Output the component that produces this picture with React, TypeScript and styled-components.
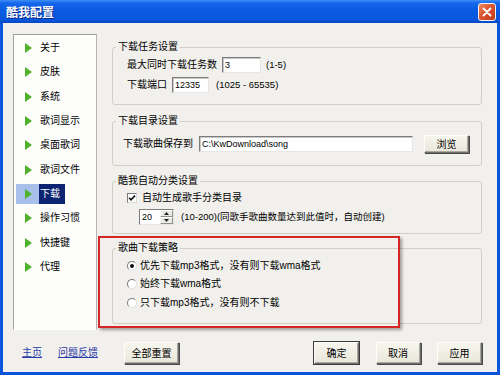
import React from "react";
import styled, { createGlobalStyle } from "styled-components";

const GlobalStyle = createGlobalStyle`
  html, body { margin: 0; padding: 0; background: #fff; }
  body {
    font-family: "Liberation Sans", "Noto Sans CJK SC", sans-serif;
    font-size: 10px;
    color: #000;
    overflow: hidden;
  }
  * { box-sizing: border-box; }
`;

const Window = styled.div`
  width: 500px;
  height: 375px;
  display: flex;
  flex-direction: column;
  background: #0b55dc;
`;

const TitleBar = styled.div`
  height: 23px;
  flex: none;
  display: flex;
  align-items: center;
  justify-content: space-between;
  padding: 0 4px 0 6px;
  background: linear-gradient(
    #3d8ef6 0%,
    #1466ea 14%,
    #0a5be2 45%,
    #0957dc 85%,
    #0846c4 100%
  );
`;

const Title = styled.div`
  color: #fff;
  font-family: "Noto Sans CJK SC", sans-serif;
  font-weight: bold;
  font-size: 12px;
  line-height: 14px;
  text-shadow: 1px 1px 0 #0b2a88;
`;

const CloseButton = styled.div`
  width: 18px;
  height: 18px;
  border: 1px solid #f4f4f4;
  border-radius: 3px;
  background: linear-gradient(135deg, #f08a66 0%, #dc5430 45%, #c03c1c 100%);
  display: flex;
  align-items: center;
  justify-content: center;
`;

const Body = styled.div`
  position: relative;
  flex: 1;
  margin: 0 3px 3px;
  background: #f1f0ec;
  padding: 11px 15px 8px 10px;
  display: flex;
  flex-direction: column;
`;

const Main = styled.div`
  display: flex;
  gap: 15px;
  height: 296px;
`;

const Sidebar = styled.ul`
  width: 84px;
  flex: none;
  margin: 0;
  padding: 3px 0 0 0;
  list-style: none;
  background: #fdfdfc;
  border: 1px solid;
  border-color: #a0a0a0 #b4b4b4 #fff #a0a0a0;
  display: flex;
  flex-direction: column;
  gap: 4.33px;
`;

const NavItem = styled.li`
  height: 20px;
  display: flex;
  align-items: stretch;
  padding-left: 2px;
`;

const NavIcon = styled.span<{ $active?: boolean }>`
  width: 23px;
  display: flex;
  align-items: center;
  padding-left: 9px;
  background: ${(p) => (p.$active ? "#a7bfea" : "transparent")};
`;

const Triangle = styled.span`
  width: 0;
  height: 0;
  border-top: 5px solid transparent;
  border-bottom: 5px solid transparent;
  border-left: 7px solid #4fb12c;
`;

const NavLabel = styled.span<{ $active?: boolean }>`
  display: flex;
  align-items: center;
  padding: 0 5px 0 1px;
  line-height: 20px;
  font-size: 10px;
  white-space: nowrap;
  color: ${(p) => (p.$active ? "#fff" : "#000")};
  background: ${(p) => (p.$active ? "#0c2472" : "transparent")};
`;

const Content = styled.div`
  flex: 1;
  min-width: 0;
  padding-top: 7px;
  display: flex;
  flex-direction: column;
`;

const Group = styled.fieldset<{ $mt?: number }>`
  margin: ${(p) => p.$mt ?? 0}px 0 0 0;
  padding: 0;
  min-width: 0;
  border: 1px solid #cfcfc6;
  border-radius: 3px;
`;

const Legend = styled.legend`
  margin-left: 3px;
  padding: 0 2px;
  font-size: 10px;
  line-height: 12px;
  color: #000;
`;

const GroupBody = styled.div<{ $pad: string; $gap: number }>`
  display: flex;
  flex-direction: column;
  padding: ${(p) => p.$pad};
  gap: ${(p) => p.$gap}px;
`;

const Row = styled.div<{ $gap?: number; $indent?: number }>`
  display: flex;
  align-items: center;
  min-height: 16px;
  gap: ${(p) => p.$gap ?? 5}px;
  padding-left: ${(p) => p.$indent ?? 0}px;
`;

const FieldLabel = styled.span`
  white-space: nowrap;
  line-height: 16px;
`;

const TextBox = styled.div<{ $w: number }>`
  width: ${(p) => p.$w}px;
  height: 16px;
  flex: none;
  background: #fff;
  border: 1px solid;
  border-color: #7c7c7c #e6e6e6 #e6e6e6 #7c7c7c;
  box-shadow: inset 1px 1px 0 #c8c8c8;
  font-family: "Liberation Sans", sans-serif;
  font-size: 9px;
  line-height: 14px;
  padding-left: 2px;
  white-space: nowrap;
  overflow: hidden;
`;

const Hint = styled.span`
  font-family: "Liberation Sans", "Noto Sans CJK SC", sans-serif;
  font-size: 9.5px;
  white-space: nowrap;
  line-height: 16px;
`;

const Button = styled.button<{ $w: number; $h: number; $default?: boolean }>`
  width: ${(p) => p.$w}px;
  height: ${(p) => p.$h}px;
  flex: none;
  padding: 0;
  margin: 0;
  font-family: "Noto Sans CJK SC", sans-serif;
  font-size: 10px;
  line-height: 12px;
  color: #000;
  background: linear-gradient(#f7f6ee, #e9e7da);
  border: 1px solid;
  border-color: #fdfdfd #6e6e6e #6e6e6e #fdfdfd;
  box-shadow: ${(p) =>
    p.$default
      ? "0 0 0 1px #3a3a3a, inset -1px -1px 0 #a8a8a0"
      : "1px 1px 0 #4a4a4a, inset -1px -1px 0 #a8a8a0"};
`;

const CheckBox = styled.span`
  width: 10px;
  height: 10px;
  flex: none;
  background: #fff;
  border: 1px solid;
  border-color: #7a7a7a #dcdcdc #dcdcdc #7a7a7a;
  display: flex;
  align-items: center;
  justify-content: center;
`;

const Spin = styled.div`
  display: flex;
  height: 16px;
  flex: none;
`;

const SpinField = styled.div`
  width: 21px;
  height: 16px;
  background: #fff;
  border: 1px solid;
  border-color: #7c7c7c #e6e6e6 #e6e6e6 #7c7c7c;
  border-right: none;
  font-family: "Liberation Sans", sans-serif;
  font-size: 9px;
  line-height: 14px;
  padding-left: 2px;
`;

const SpinButtons = styled.div`
  width: 14px;
  height: 16px;
  display: flex;
  flex-direction: column;
  border: 1px solid;
  border-color: #7c7c7c #e6e6e6 #e6e6e6 #7c7c7c;
  border-left: none;
`;

const SpinHalf = styled.div`
  flex: 1;
  display: flex;
  align-items: center;
  justify-content: center;
  background: #ecebe3;
  border: 1px solid;
  border-color: #fff #909090 #909090 #fff;
`;

const Radio = styled.span<{ $checked?: boolean }>`
  width: 10px;
  height: 10px;
  flex: none;
  border-radius: 50%;
  background: #fff;
  border: 1px solid;
  border-color: #7a7a7a #e0e0e0 #e0e0e0 #7a7a7a;
  display: flex;
  align-items: center;
  justify-content: center;
  &::after {
    content: "";
    width: 4px;
    height: 4px;
    border-radius: 50%;
    background: ${(p) => (p.$checked ? "#111" : "transparent")};
  }
`;

const Footer = styled.div`
  display: flex;
  align-items: center;
  height: 22px;
  margin-top: 12px;
  padding-left: 9px;
`;

const FooterLink = styled.a<{ $ml?: number }>`
  margin-left: ${(p) => p.$ml ?? 0}px;
  color: #2a3aa6;
  text-decoration: underline;
  font-size: 10px;
  line-height: 14px;
  cursor: pointer;
`;

const LeftActions = styled.div`
  margin-left: 26px;
  display: flex;
`;

const RightActions = styled.div`
  margin-left: auto;
  display: flex;
  gap: 16.5px;
`;

const Highlight = styled.div`
  position: absolute;
  left: 95px;
  top: 213px;
  width: 302px;
  height: 92px;
  border: 2.5px solid #d42626;
  box-shadow: 2px 2px 3px rgba(0, 0, 0, 0.35);
  pointer-events: none;
`;

const navItems = [
  "关于",
  "皮肤",
  "系统",
  "歌词显示",
  "桌面歌词",
  "歌词文件",
  "下载",
  "操作习惯",
  "快捷键",
  "代理",
];

const strategies = [
  "优先下载mp3格式，没有则下载wma格式",
  "始终下载wma格式",
  "只下载mp3格式，没有则不下载",
];

export default function App() {
  return (
    <>
      <GlobalStyle />
      <Window>
        <TitleBar>
          <Title>酷我配置</Title>
          <CloseButton>
            <svg width="10" height="10" viewBox="0 0 10 10">
              <path d="M1.5 1.5 L8.5 8.5 M8.5 1.5 L1.5 8.5" stroke="#fff" strokeWidth="1.8" strokeLinecap="round" />
            </svg>
          </CloseButton>
        </TitleBar>
        <Body>
          <Main>
            <Sidebar>
              {navItems.map((n) => (
                <NavItem key={n}>
                  <NavIcon $active={n === "下载"}>
                    <Triangle />
                  </NavIcon>
                  <NavLabel $active={n === "下载"}>{n}</NavLabel>
                </NavItem>
              ))}
            </Sidebar>
            <Content>
              <Group>
                <Legend>下载任务设置</Legend>
                <GroupBody $pad="4px 0 11px 14px" $gap={4}>
                  <Row>
                    <FieldLabel>最大同时下载任务数</FieldLabel>
                    <TextBox $w={39}>3</TextBox>
                    <Hint>(1-5)</Hint>
                  </Row>
                  <Row>
                    <FieldLabel>下载端口</FieldLabel>
                    <TextBox $w={37}>12335</TextBox>
                    <Hint style={{ marginLeft: 2 }}>(1025 - 65535)</Hint>
                  </Row>
                </GroupBody>
              </Group>
              <Group $mt={10}>
                <Legend>下载目录设置</Legend>
                <GroupBody $pad="8px 0 12px 10px" $gap={0}>
                  <Row $gap={6}>
                    <FieldLabel>下载歌曲保存到</FieldLabel>
                    <TextBox $w={214}>C:\KwDownload\song</TextBox>
                    <Button $w={45} $h={18} style={{ marginLeft: 5 }}>
                      浏览
                    </Button>
                  </Row>
                </GroupBody>
              </Group>
              <Group $mt={9}>
                <Legend>酷我自动分类设置</Legend>
                <GroupBody $pad="3px 0 8px 14px" $gap={3}>
                  <Row $gap={5}>
                    <CheckBox>
                      <svg width="8" height="8" viewBox="0 0 8 8">
                        <path d="M1 3.8 L3 5.8 L7 1.6" stroke="#111" strokeWidth="1.6" fill="none" />
                      </svg>
                    </CheckBox>
                    <FieldLabel>自动生成歌手分类目录</FieldLabel>
                  </Row>
                  <Row $gap={7} $indent={12}>
                    <Spin>
                      <SpinField>20</SpinField>
                      <SpinButtons>
                        <SpinHalf>
                          <svg width="5" height="3" viewBox="0 0 5 3">
                            <path d="M0 3 L2.5 0 L5 3 Z" fill="#222" />
                          </svg>
                        </SpinHalf>
                        <SpinHalf>
                          <svg width="5" height="3" viewBox="0 0 5 3">
                            <path d="M0 0 L2.5 3 L5 0 Z" fill="#222" />
                          </svg>
                        </SpinHalf>
                      </SpinButtons>
                    </Spin>
                    <Hint>(10-200)(同歌手歌曲数量达到此值时，自动创建)</Hint>
                  </Row>
                </GroupBody>
              </Group>
              <Group $mt={8}>
                <Legend>歌曲下载策略</Legend>
                <GroupBody $pad="3.5px 0 12px 14px" $gap={2.75}>
                  {strategies.map((s, i) => (
                    <Row key={s} $gap={3}>
                      <Radio $checked={i === 0} />
                      <FieldLabel>{s}</FieldLabel>
                    </Row>
                  ))}
                </GroupBody>
              </Group>
            </Content>
          </Main>
          <Footer>
            <FooterLink>主页</FooterLink>
            <FooterLink $ml={16}>问题反馈</FooterLink>
            <LeftActions>
              <Button $w={55} $h={22}>全部重置</Button>
            </LeftActions>
            <RightActions>
              <Button $w={45} $h={22} $default>
                确定
              </Button>
              <Button $w={45} $h={22}>取消</Button>
              <Button $w={45} $h={22}>应用</Button>
            </RightActions>
          </Footer>
          <Highlight />
        </Body>
      </Window>
    </>
  );
}
